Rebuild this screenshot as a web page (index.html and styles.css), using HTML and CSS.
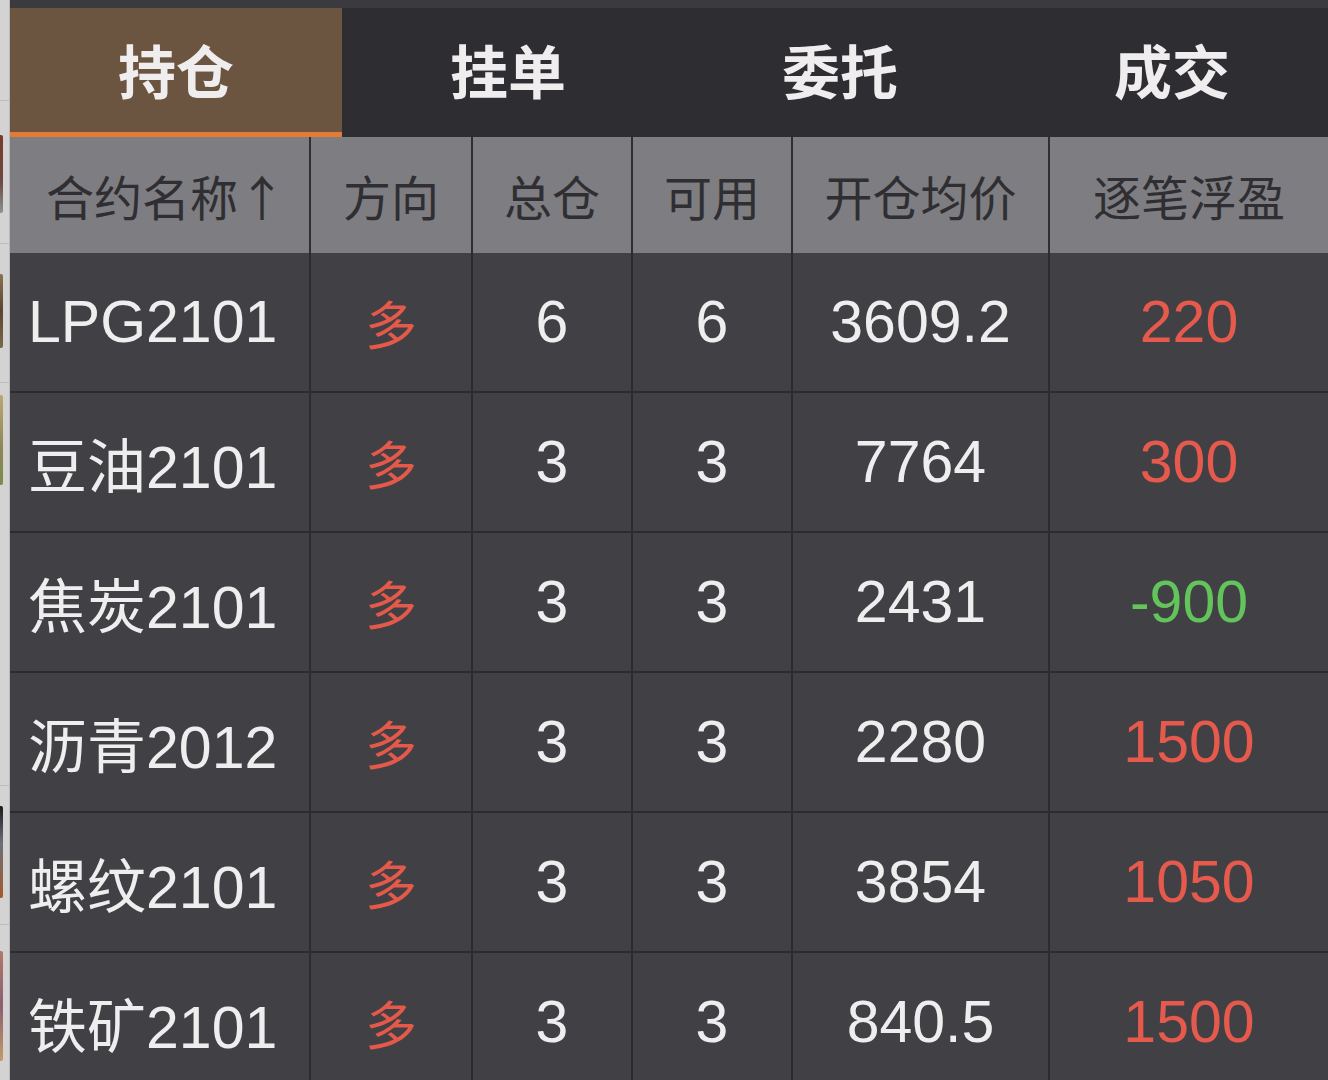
FILE: index.html
```html
<!DOCTYPE html>
<html lang="zh-CN">
<head>
    <meta charset="UTF-8">
    <meta name="viewport" content="width=device-width, initial-scale=1.0">
    <title>持仓</title>
    <link rel="stylesheet" href="styles.css">
</head>
<body>
    <div class="page">
        <div class="side">
            <div class="side-item gap-a"></div>
            <div class="thumb t1"></div>
            <div class="side-item gap-b"></div>
            <div class="thumb t2"></div>
            <div class="side-item gap-c"></div>
            <div class="thumb t3"></div>
            <div class="side-item gap-d"></div>
            <div class="thumb t4"></div>
            <div class="side-item gap-e"></div>
            <div class="thumb t5"></div>
        </div>

        <div class="panel">
            <div class="top-band"></div>

            <div class="tabs">
                <div class="tab active">持仓</div>
                <div class="tab">挂单</div>
                <div class="tab">委托</div>
                <div class="tab">成交</div>
            </div>

            <table class="positions">
                <colgroup>
                    <col class="c-name">
                    <col class="c-dir">
                    <col class="c-total">
                    <col class="c-avail">
                    <col class="c-price">
                    <col class="c-pnl">
                </colgroup>
                <thead>
                    <tr>
                        <th class="name">合约名称↑</th>
                        <th>方向</th>
                        <th>总仓</th>
                        <th>可用</th>
                        <th>开仓均价</th>
                        <th>逐笔浮盈</th>
                    </tr>
                </thead>
                <tbody>
                    <tr>
                        <td class="name">LPG2101</td>
                        <td class="dir">多</td>
                        <td>6</td>
                        <td>6</td>
                        <td>3609.2</td>
                        <td class="up">220</td>
                    </tr>
                    <tr>
                        <td class="name">豆油2101</td>
                        <td class="dir">多</td>
                        <td>3</td>
                        <td>3</td>
                        <td>7764</td>
                        <td class="up">300</td>
                    </tr>
                    <tr>
                        <td class="name">焦炭2101</td>
                        <td class="dir">多</td>
                        <td>3</td>
                        <td>3</td>
                        <td>2431</td>
                        <td class="down">-900</td>
                    </tr>
                    <tr>
                        <td class="name">沥青2012</td>
                        <td class="dir">多</td>
                        <td>3</td>
                        <td>3</td>
                        <td>2280</td>
                        <td class="up">1500</td>
                    </tr>
                    <tr>
                        <td class="name">螺纹2101</td>
                        <td class="dir">多</td>
                        <td>3</td>
                        <td>3</td>
                        <td>3854</td>
                        <td class="up">1050</td>
                    </tr>
                    <tr>
                        <td class="name">铁矿2101</td>
                        <td class="dir">多</td>
                        <td>3</td>
                        <td>3</td>
                        <td>840.5</td>
                        <td class="up">1500</td>
                    </tr>
                </tbody>
            </table>
        </div>
    </div>
</body>
</html>
```

FILE: styles.css
```css
body {
    margin: 0;
    background: #414044;
    font-family: "Liberation Sans", "Noto Sans CJK SC", sans-serif;
    overflow: hidden;
}
.page {
    display: flex;
    width: 1328px;
    height: 1080px;
}

/* strip of the list behind the panel */
.side {
    width: 9px;
    flex-shrink: 0;
    background: #d3d3d3;
    border-right: 1px solid #b9b9b9;
    display: flex;
    flex-direction: column;
}
.side-item {
    border-bottom: 1px solid #bdbdbd;
}
.gap-a { height: 100px; margin-bottom: 34px; }
.gap-b { height: 30px; margin-bottom: 30px; }
.gap-c { height: 34px; margin-bottom: 12px; }
.gap-d { height: 300px; margin-bottom: 20px; }
.gap-e { height: 26px; margin-bottom: 26px; }
.thumb {
    width: 3px;
    border-radius: 0 2px 2px 0;
}
.t1 { height: 78px; background: linear-gradient(#7a3a2a, #6d4a3e 60%, #8c9296); }
.t2 { height: 74px; background: linear-gradient(#8a7350, #5a4330 50%, #7b6a48); }
.t3 { height: 90px; background: linear-gradient(#b9a872, #8e8656 60%, #7c8a4d); }
.t4 { height: 92px; background: linear-gradient(#1b1a1c, #6b6f78 40%, #a35a2c); }
.t5 { height: 110px; background: linear-gradient(#b27868, #8a5f70 50%, #c49a66); }

.panel {
    flex: 1;
    min-width: 0;
    background: #414044;
    border-bottom-left-radius: 10px;
    overflow: hidden;
}
.top-band {
    height: 8px;
    background: #3b3a3e;
}

.tabs {
    display: flex;
    height: 129px;
    background: #2e2d31;
}
.tab {
    width: 332px;
    flex-shrink: 0;
    display: flex;
    align-items: center;
    justify-content: center;
    padding-bottom: 8px;
    font-family: "Noto Sans CJK SC", sans-serif;
    font-size: 58px;
    font-weight: bold;
    color: #efedee;
}
.tab.active {
    background: #6b5540;
    border-bottom: 5px solid #e57a34;
    padding-bottom: 3px;
}

.positions {
    width: 100%;
    border-collapse: collapse;
    table-layout: fixed;
}
.c-name { width: 300px; }
.c-dir { width: 162px; }
.c-total { width: 160px; }
.c-avail { width: 160px; }
.c-price { width: 257px; }
.c-pnl { width: auto; }

.positions th {
    height: 116px;
    padding: 0;
    background: #7e7d81;
    color: #2f2e32;
    font-family: "Noto Sans CJK SC", sans-serif;
    font-size: 48px;
    font-weight: normal;
    text-align: center;
    border-left: 2px solid #2f2e32;
}
.positions th:first-child,
.positions td:first-child {
    border-left: none;
}
.positions th.name {
    text-align: left;
    padding-left: 36px;
}
.positions td {
    height: 138px;
    padding: 0;
    text-align: center;
    color: #efeeef;
    font-size: 59px;
    border-left: 2px solid #2c2b2f;
    border-bottom: 2px solid #2c2b2f;
}
.positions td.name {
    text-align: left;
    padding-left: 18px;
}
.positions td.dir {
    color: #e4594a;
    font-family: "Noto Sans CJK SC", sans-serif;
    font-size: 52px;
}
.up {
    color: #e55a4c !important;
}
.down {
    color: #62c45b !important;
}
```
